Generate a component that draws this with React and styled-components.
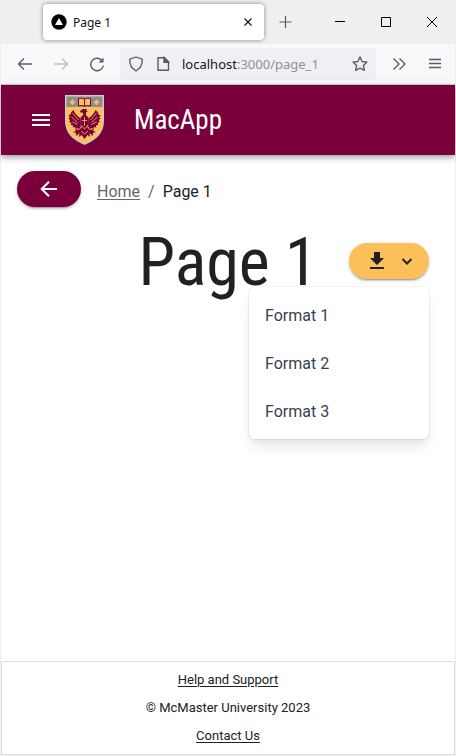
import React from "react";
import styled, { createGlobalStyle } from "styled-components";

const GlobalStyle = createGlobalStyle`
  *, *::before, *::after { box-sizing: border-box; }
  body { margin: 0; background: #ffffff; }
  button, input { font: inherit; color: inherit; }
`;

const Window = styled.div`
  min-height: 100vh;
  display: flex;
  flex-direction: column;
  border: solid #efefef;
  border-width: 0 1px 1px;
  background: #ffffff;
  color: #212121;
  font-family: Roboto, sans-serif;
`;

const TabStrip = styled.div`
  display: flex;
  align-items: center;
  height: 44px;
  padding-left: 42px;
  background: #efefef;
  color: #15141a;
  font-family: "Noto Sans", sans-serif;
`;

const Tab = styled.div`
  display: flex;
  align-items: center;
  flex: 0 1 221px;
  height: 36px;
  padding: 0 8px;
  gap: 6px;
  border-radius: 4px;
  background: #ffffff;
  box-shadow: 0 0 4px rgba(0, 0, 0, 0.45);
  font-size: 12px;
`;

const TabTitle = styled.span`
  flex: 1;
`;

const IconButton = styled.button`
  display: flex;
  align-items: center;
  justify-content: center;
  flex: none;
  width: ${(p) => p.$width || 16}px;
  height: 32px;
  padding: 0;
  border: 0;
  background: none;
  color: ${(p) => p.$color || "#5b5b66"};
  cursor: pointer;
`;

const WindowControls = styled.div`
  display: flex;
  margin-left: auto;
`;

const Toolbar = styled.div`
  display: flex;
  align-items: center;
  height: 41px;
  padding: 0 2px 0 6px;
  background: #f9f9fb;
  border-bottom: 1px solid #cccccc;
`;

const AddressBar = styled.div`
  display: flex;
  align-items: center;
  flex: 1;
  min-width: 0;
  height: 32px;
  margin: 0 5px;
  padding: 0 8px;
  gap: 11px;
  border-radius: 4px;
  background: #f0f0f4;
  color: #5b5b66;
`;

const Address = styled.div`
  flex: 1;
  min-width: 0;
  overflow: hidden;
  white-space: nowrap;
  color: #8f8f9d;
  font-family: "Noto Sans", sans-serif;
  font-size: 13px;
`;

const Host = styled.span`
  color: #15141a;
`;

const AppBar = styled.header`
  display: flex;
  align-items: center;
  height: 70px;
  padding: 0 24px;
  background: #7a003c;
  color: #ffffff;
  box-shadow: 0 2px 4px -1px rgba(0, 0, 0, 0.2), 0 4px 5px rgba(0, 0, 0, 0.14), 0 1px 10px rgba(0, 0, 0, 0.12);
`;

const Logo = styled.div`
  display: flex;
  margin-left: 8px;
`;

const Brand = styled.div`
  margin-left: 30px;
  font-family: "Roboto Condensed", Roboto, sans-serif;
  font-size: 27px;
  line-height: 36px;
`;

const Main = styled.main`
  flex: 1;
`;

const CrumbBar = styled.div`
  display: flex;
  align-items: center;
  gap: 16px;
  padding: 16px 16px 0;
`;

const Pill = styled.button`
  display: flex;
  align-items: center;
  justify-content: center;
  gap: 8px;
  width: ${(p) => p.$width}px;
  height: 36px;
  padding: 0 0 0 ${(p) => p.$inset || 0}px;
  border: 0;
  border-radius: 18px;
  background: ${(p) => p.$background};
  color: ${(p) => p.$color};
  box-shadow: 0 3px 1px -2px rgba(0, 0, 0, 0.2), 0 2px 2px rgba(0, 0, 0, 0.14), 0 1px 5px rgba(0, 0, 0, 0.12);
  cursor: pointer;
`;

const Breadcrumbs = styled.nav`
  display: flex;
  gap: 8px;
  padding-top: 5px;
  font-size: 16px;
  line-height: 24px;
  color: #666666;
`;

const CrumbLink = styled.a`
  color: inherit;
  text-underline-offset: 2px;
`;

const CurrentCrumb = styled.span`
  color: #212121;
`;

const TitleRow = styled.div`
  display: grid;
  grid-template-columns: 1fr auto 1fr;
  align-items: center;
  padding: 12px 26px 0;
`;

const Title = styled.h1`
  grid-column: 2;
  margin: 0;
  padding-top: 4px;
  font-family: "Roboto Condensed", Roboto, sans-serif;
  font-weight: 400;
  font-size: 66px;
  line-height: 80px;
  white-space: nowrap;
`;

const Download = styled.div`
  position: relative;
  justify-self: end;
`;

const Menu = styled.div`
  position: absolute;
  top: 44px;
  right: 0;
  width: 180px;
  padding: 4px 0;
  border-radius: 6px;
  background: #ffffff;
  box-shadow: 0 0 0 1px rgba(0, 0, 0, 0.05), 0 10px 15px -3px rgba(0, 0, 0, 0.1), 0 4px 6px -2px rgba(0, 0, 0, 0.05);
`;

const MenuItem = styled.button`
  display: block;
  width: 100%;
  height: 48px;
  padding: 0 16px;
  border: 0;
  background: none;
  color: #374151;
  font-size: 16px;
  text-align: left;
  cursor: pointer;
`;

const Footer = styled.footer`
  display: flex;
  flex-direction: column;
  align-items: center;
  gap: 8px;
  padding: 8px 0;
  border: 1px solid #dfdfdf;
  font-size: 13px;
  line-height: 20px;
`;

const FooterLink = styled.a`
  color: inherit;
  text-underline-offset: 2px;
`;

function Stroke({ size = 16, width = 1, view = 16, children }) {
  return (
    <svg width={size} height={size} viewBox={`0 0 ${view} ${view}`} fill="none" stroke="currentColor" strokeWidth={width} aria-hidden="true">
      {children}
    </svg>
  );
}

function Crest() {
  return (
    <svg width="39" height="50" viewBox="0 0 39 50" role="img" aria-label="McMaster University crest">
      <path d="M.7.7h37.6V26c0 13-8.800 18.500-18.800 23.200C9.500 44.500.7 39 .7 26z" fill="#fdbf57" stroke="#c9cbce" strokeWidth="1.400" />
      <path d="M1.500 1.500h36V12h-36z" fill="#8b8e91" />
      <path d="M7.500 4l1.300 2 2 1.300-2 1.300-1.300 2-1.300-2-2-1.300 2-1.300zM31.500 4l1.300 2 2 1.300-2 1.300-1.300 2-1.300-2-2-1.300 2-1.300z" fill="#fdbf57" />
      <path d="M13.500 3.500q3-.8 6 .6 3-1.400 6-.6v7.300q-3-.8-6 .3-3-1.100-6-.3z" fill="#fdbf57" stroke="#7a003c" strokeWidth="1" />
      <path d="M19.500 4v7" stroke="#7a003c" />
      <g fill="#7a003c">
        <path d="M15.500 15.500l2.500-1.500h4l-1 1.500 2 1-2 .8v3l2.500 2.200v8l-4 4-4-4v-8l2.800-2.500-.6-2.200-2.700-.5z" />
        <path d="M15.500 23.500C12.500 21 10 19 8.500 15c-1.800 1-3 3-3.200 5l-2 .3 1.600 2-1.600 1.500 2 1.200-1.200 2 2.300.7-.7 2.200 2.300.3-.2 2.200 2.300-.3.500 2 2-1 1.300 1.500 2-3z" />
        <path d="M23.500 23.500C26.500 21 29 19 30.500 15c1.800 1 3 3 3.200 5l2 .3-1.600 2 1.600 1.500-2 1.200 1.200 2-2.300.7.7 2.200-2.300.3.2 2.200-2.300-.3-.5 2-2-1-1.300 1.500-2-3z" />
        <path d="M17 32l-3 3-4-1 1 2-3 1 3 1 .5 3 3-3-.5 4 2.500-2 3 4 3-4 2.500 2-.5-4 3 3 .5-3 3-1-3-1 1-2-4 1-3-3z" />
      </g>
      <path d="M19.500 22v9M16.800 25.500h5.400M7.500 18l6 7M6.500 22l6 5.500M31.500 18l-6 7M32.500 22l-6 5.500M7.500 27l5 2.500M31.500 27l-5 2.500M16 30l3.500 4 3.500-4M16 36l3.500 3 3.500-3" fill="none" stroke="#fdbf57" strokeWidth=".8" />
    </svg>
  );
}

export default function App() {
  return (
    <Window>
      <GlobalStyle />
      <TabStrip>
        <Tab>
          <svg width="16" height="16" viewBox="0 0 16 16" aria-hidden="true">
            <circle cx="8" cy="8" r="7.700" fill="#000" />
            <path d="M8 4l4 7H4z" fill="#fff" />
          </svg>
          <TabTitle>Page 1</TabTitle>
          <IconButton aria-label="Close tab" $color="#15141a">
            <Stroke width={1.2}><path d="M4.500 4.500l7 7M11.500 4.500l-7 7" /></Stroke>
          </IconButton>
        </Tab>
        <IconButton aria-label="New tab" $width={44}>
          <Stroke width={1.2}><path d="M7.500 2v12M1.500 8h12" /></Stroke>
        </IconButton>
        <WindowControls>
          <IconButton aria-label="Minimize" $width={46} $color="#000">
            <Stroke><path d="M3 7.500h10" /></Stroke>
          </IconButton>
          <IconButton aria-label="Maximize" $width={46} $color="#000">
            <Stroke><path d="M3.500 3.500h9v9h-9z" /></Stroke>
          </IconButton>
          <IconButton aria-label="Close" $width={46} $color="#000">
            <Stroke><path d="M3 3l10 10M13 3L3 13" /></Stroke>
          </IconButton>
        </WindowControls>
      </TabStrip>
      <Toolbar>
        <IconButton aria-label="Back" $width={36}>
          <Stroke width={1.3}><path d="M15 8H1.500M7 2.500L1.500 8 7 13.500" /></Stroke>
        </IconButton>
        <IconButton aria-label="Forward" $width={36} $color="#bebec4">
          <Stroke width={1.3}><path d="M1 8h13.500M9 2.500L14.500 8 9 13.500" /></Stroke>
        </IconButton>
        <IconButton aria-label="Reload" $width={36}>
          <Stroke width={1.4}>
            <path d="M12.500 4A6.300 6.300 0 1 0 14.300 9.500" />
            <path d="M14.500 1.500v5h-5z" fill="currentColor" stroke="none" />
          </Stroke>
        </IconButton>
        <AddressBar>
          <Stroke width={1.3}><path d="M8 1L14.300 3.200C14.500 9 12.500 12.500 8 15 3.500 12.500 1.500 9 1.700 3.200z" strokeLinejoin="round" /></Stroke>
          <Stroke width={1.4}>
            <path d="M3 1.700h6.500l4 4v8.600H3z" strokeLinejoin="round" />
            <path d="M9 1.500v4.700h4.500z" fill="currentColor" />
          </Stroke>
          <Address><Host>localhost</Host>:3000/page_1</Address>
          <Stroke width={1.4}><path d="M8 1l2.100 4.500 4.900.6-3.600 3.400.9 4.900L8 12l-4.300 2.400.9-4.900L1 6.100l4.900-.6z" strokeLinejoin="round" /></Stroke>
        </AddressBar>
        <IconButton aria-label="More tools" $width={36}>
          <Stroke width={1.4}><path d="M2.500 2.500L8 8l-5.500 5.500M8.500 2.500L14 8l-5.500 5.500" /></Stroke>
        </IconButton>
        <IconButton aria-label="Open application menu" $width={36}>
          <Stroke width={1.3}><path d="M2 3.500h12M2 7.500h12M2 11.500h12" /></Stroke>
        </IconButton>
      </Toolbar>
      <AppBar>
        <IconButton aria-label="Open navigation" $width={32} $color="#fff">
          <Stroke size={24} view={24} width={2}><path d="M3 7h18M3 12h18M3 17h18" /></Stroke>
        </IconButton>
        <Logo>
          <Crest />
        </Logo>
        <Brand>MacApp</Brand>
      </AppBar>
      <Main>
        <CrumbBar>
          <Pill aria-label="Go back" $width={64} $background="#7a003c" $color="#fff">
            <Stroke size={24} view={24} width={2}><path d="M20 12H5M12 4.700L4.700 12l7.300 7.300" /></Stroke>
          </Pill>
          <Breadcrumbs aria-label="Breadcrumb">
            <CrumbLink href="#home">Home</CrumbLink>
            <span>/</span>
            <CurrentCrumb aria-current="page">Page 1</CurrentCrumb>
          </Breadcrumbs>
        </CrumbBar>
        <TitleRow>
          <Title>Page 1</Title>
          <Download>
            <Pill aria-label="Download" aria-haspopup="menu" aria-expanded="true" $width={80} $inset={4} $background="#fdbf57" $color="#212121">
              <svg width="24" height="24" viewBox="0 0 24 24" fill="currentColor" aria-hidden="true">
                <path d="M19 9h-4V3H9v6H5l7 7zM5 18v2h14v-2z" />
              </svg>
              <Stroke size={20} view={20} width={2}><path d="M5.500 8L10 12.500l4.500-4.500" /></Stroke>
            </Pill>
            <Menu role="menu">
              <MenuItem role="menuitem">Format 1</MenuItem>
              <MenuItem role="menuitem">Format 2</MenuItem>
              <MenuItem role="menuitem">Format 3</MenuItem>
            </Menu>
          </Download>
        </TitleRow>
      </Main>
      <Footer>
        <FooterLink href="#help">Help and Support</FooterLink>
        <span>© McMaster University 2023</span>
        <FooterLink href="#contact">Contact Us</FooterLink>
      </Footer>
    </Window>
  );
}
